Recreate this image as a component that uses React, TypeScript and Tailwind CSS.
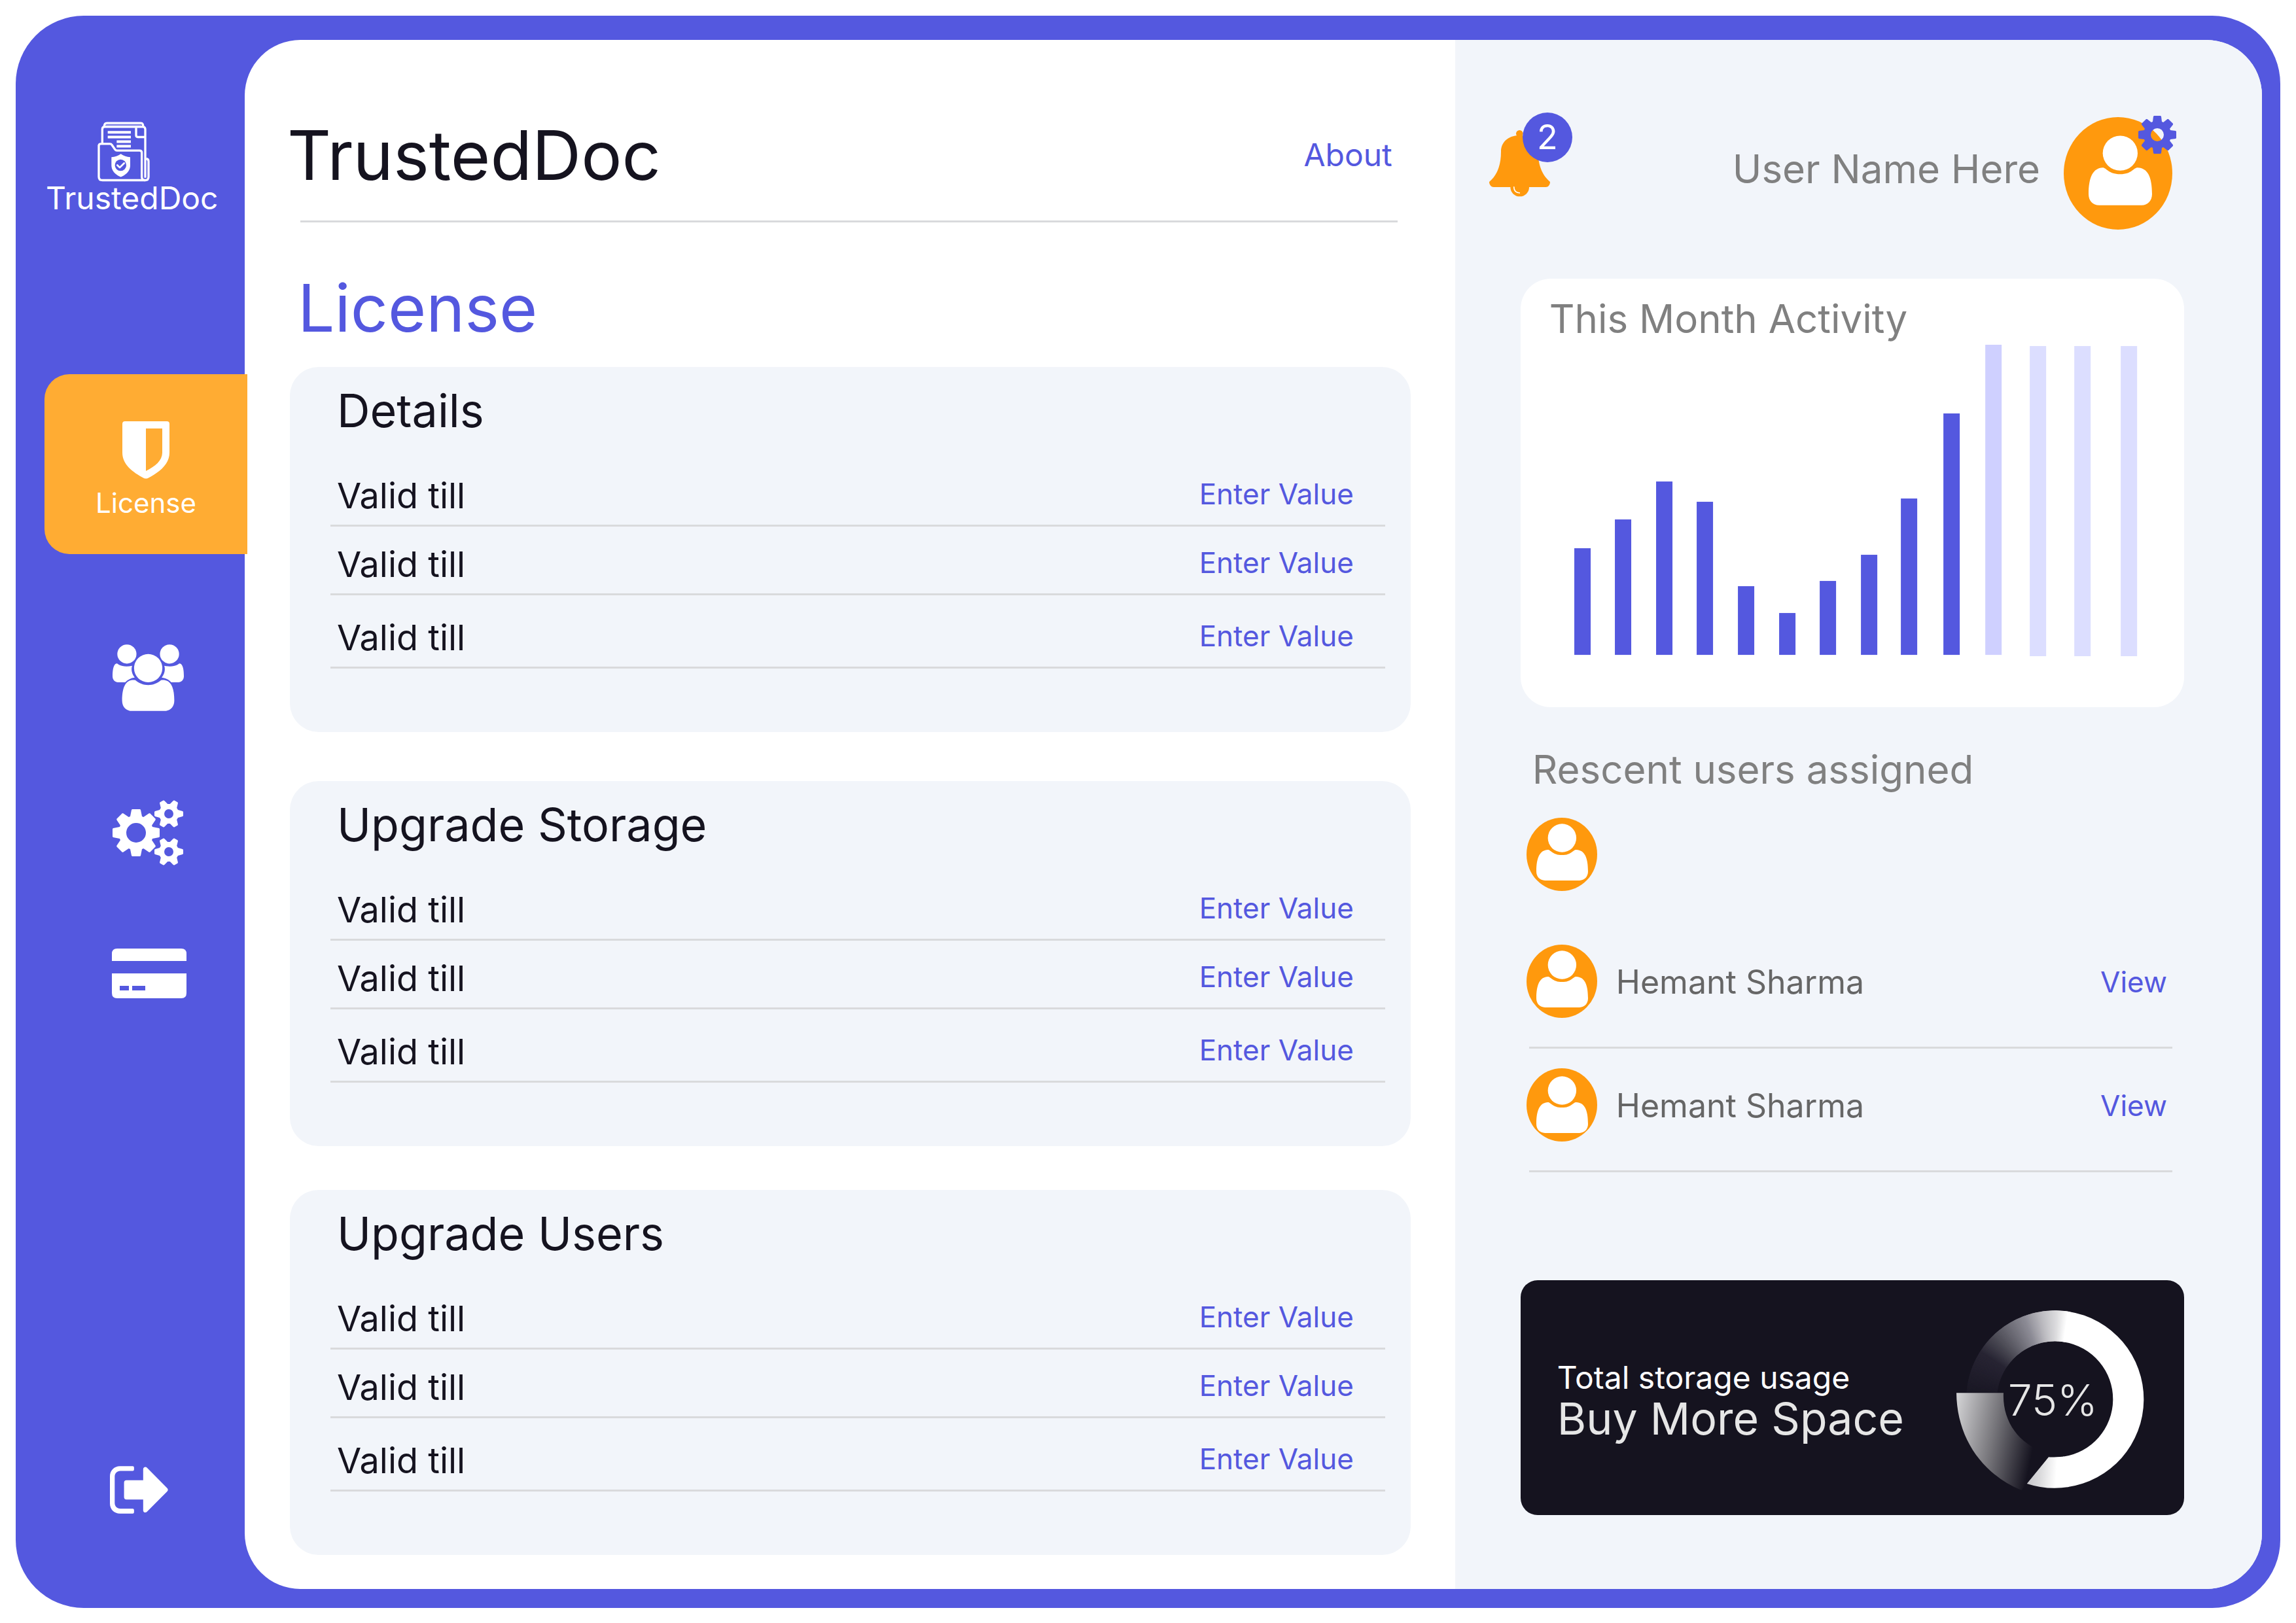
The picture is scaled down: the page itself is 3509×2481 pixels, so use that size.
import React from "react";

/* ---------- drawing helpers ---------- */

function gearPath(cx: number, cy: number, r: number, teeth: number, root: number, hole: number, tip: number, base: number) {
  const pts: string[] = [];
  for (let i = 0; i < teeth; i++) {
    const a = (i * 2 * Math.PI) / teeth;
    const corners = [
      [root, -base],
      [r - 1, -tip],
      [r, -tip + 1],
      [r, tip - 1],
      [r - 1, tip],
      [root, base],
    ];
    corners.forEach(([x, y]) => {
      const px = cx + x * Math.cos(a) - y * Math.sin(a);
      const py = cy + x * Math.sin(a) + y * Math.cos(a);
      pts.push(`${px.toFixed(2)} ${py.toFixed(2)}`);
    });
  }
  return `M${pts.join("L")}Z M${cx - hole} ${cy}a${hole} ${hole} 0 1 0 ${2 * hole} 0a${hole} ${hole} 0 1 0 ${-2 * hole} 0Z`;
}

function LogoIcon() {
  return (
    <svg viewBox="444 252 246 281" className="h-[94px] w-[82px]" fill="none" stroke="#fff" strokeWidth="10" aria-hidden="true">
      <path d="M478 278C478 267 482 261 490 261H646C654 261 657 268 656 278" />
      <path d="M486 270H648" stroke="#8c8fea" strokeWidth="6" />
      <path d="M469 353V289Q469 278 480 278H655Q666 278 666 290V512" />
      <path d="M624 282V317Q624 325 632 325H664" />
      <path d="M494 303H600M494 325H600M535 346H600M535 367H600" strokeWidth="12" />
      <path d="M453 365Q453 356 463 356H504Q510 356 513 361L528 383Q531 387 536 387H640Q650 387 650 397V507Q650 523 665 523Q681 523 681 507V436Q681 426 670 424" />
      <path d="M453 363V507Q453 523 470 523H666" />
      <path d="M554 402Q535 415 511 417V455C511 485 535 500 554 508C573 500 597 485 597 455V417Q573 415 554 402Z" fill="#fff" stroke="none" />
      <circle cx="553" cy="454" r="26" fill="#5458df" stroke="none" />
      <path d="M538 454L549 465L569 445" strokeWidth="8" strokeLinecap="round" strokeLinejoin="round" />
    </svg>
  );
}

function ShieldIcon() {
  return (
    <svg viewBox="0 0 72 88" className="h-[88px] w-[72px]" fill="#fff" aria-hidden="true">
      <path
        fillRule="evenodd"
        d="M4 0H68Q72 0 72 4V48C72 66 56 78 39 87Q36 88 33 87C16 78 0 66 0 48V4Q0 0 4 0ZM36 11V76C50 69 61 60 61 48V11Z"
      />
    </svg>
  );
}

function UsersIcon() {
  const side =
    "M88 160C104 172 126 176 156 170C151 186 153 206 168 224C150 226 136 234 124 246H96C78 246 66 236 66 218C66 190 70 158 88 160Z";
  return (
    <svg viewBox="66 72 328 306" className="h-[102px] w-[109px]" fill="#fff" aria-hidden="true">
      <circle cx="132" cy="116" r="44" />
      <circle cx="328" cy="116" r="44" />
      <path d={side} />
      <path d={side} transform="matrix(-1 0 0 1 460 0)" />
      <circle cx="230" cy="181" r="65" />
      <path d="M171 236C205 266 255 266 289 236C330 230 350 262 350 330C350 360 330 378 304 378H156C130 378 110 360 110 330C110 262 130 230 171 236Z" />
    </svg>
  );
}

function CogsIcon() {
  return (
    <svg viewBox="0 0 108 100" className="h-[100px] w-[108px]" fill="#fff" fillRule="evenodd" aria-hidden="true">
      <path d={gearPath(36, 50, 36, 8, 25, 15, 7, 9)} />
      <path d={gearPath(86, 21, 22, 6, 14, 7, 4, 6)} />
      <path d={gearPath(86, 79, 22, 6, 14, 7, 4, 6)} />
    </svg>
  );
}

function CardIcon() {
  return (
    <svg viewBox="0 0 114 76" className="h-[76px] w-[114px]" fill="#fff" aria-hidden="true">
      <path d="M8 0H106Q114 0 114 8V19H0V8Q0 0 8 0Z" />
      <path fillRule="evenodd" d="M0 38H114V68Q114 76 106 76H8Q0 76 0 68ZM12 57V64H26V57ZM31 57V64H51V57Z" />
    </svg>
  );
}

function SignOutIcon() {
  return (
    <svg viewBox="204 177 268 219" className="h-[73px] w-[89px]" fill="#fff" aria-hidden="true">
      <path d="M250 177H309Q315 177 315 183V193Q315 199 309 199H252C237 199 226 210 226 226V346C226 362 237 373 252 373H309Q315 373 315 379V390Q315 396 309 396H250C224 396 204 376 204 350V223C204 197 224 177 250 177Z" />
      <path d="M280 242H357V192C357 182 368 178 375 185L468 279Q474 286 468 293L375 387C368 394 357 390 357 381V331H280Q269 331 269 320V253Q269 242 280 242Z" />
    </svg>
  );
}

function BellIcon() {
  return (
    <svg viewBox="48 117 279 306" className="h-[102px] w-[93px]" fill="#ff990d" aria-hidden="true">
      <circle cx="187" cy="133" r="16" />
      <circle cx="188" cy="378" r="43" />
      <path d="M187 140C130 142 102 175 102 215C102 285 80 327 48 354C48 368 58 378 68 378H308C318 378 327 368 327 354C295 327 272 285 272 215C272 175 244 142 187 140Z" />
      <path d="M161 376C161 396 172 405 189 405" fill="none" stroke="#fff" strokeWidth="5" />
    </svg>
  );
}

const figure =
  "M224 288C240 288 250 318 304 318C358 318 364 288 384 288C430 290 450 330 450 410C450 440 430 461 402 461H208C178 461 159 440 159 410C159 330 180 290 224 288Z";

function ProfilePicture() {
  return (
    <svg viewBox="0 0 166 172" className="h-[172px] w-[166px]" aria-hidden="true">
      <ellipse cx="83" cy="86" rx="83" ry="86" fill="#ff990d" />
      <svg x="38" y="28" width="97" height="107" viewBox="159 141 291 320" fill="#fff">
        <circle cx="304" cy="222" r="80" />
        <path d={figure} />
      </svg>
    </svg>
  );
}

function Avatar({ drop = 0 }: { drop?: number }) {
  return (
    <svg viewBox="0 0 109 113" className="-ml-1 h-[113px] w-[109px] shrink-0" aria-hidden="true">
      <ellipse cx="54" cy="56" rx="54" ry="56" fill="#ff990d" />
      <svg x="15" y={9 + drop} width="79" height="87" viewBox="159 141 291 320" fill="#fff">
        <circle cx="304" cy="222" r="80" />
        <path d={figure} />
      </svg>
    </svg>
  );
}

function ActivityChart() {
  const bars: [number, number, string][] = [
    [82, 321, "#5458df"],
    [144, 277, "#5458df"],
    [207, 219, "#5458df"],
    [269, 250, "#5458df"],
    [332, 379, "#5458df"],
    [395, 420, "#5458df"],
    [457, 371, "#5458df"],
    [520, 331, "#5458df"],
    [581, 245, "#5458df"],
    [646, 115, "#5458df"],
    [710, 10, "#cfd0ff"],
    [778, 12, "#dcdeff"],
    [846, 12, "#dcdeff"],
    [917, 12, "#dcdeff"],
  ];
  return (
    <svg viewBox="0 0 1014 564" className="block h-auto w-full" role="img" aria-label="Activity per day">
      {bars.map(([x, y, fill]) => (
        <rect key={x} x={x} y={y} width="25" height={(y === 12 ? 486 : 484) - y} fill={fill} />
      ))}
    </svg>
  );
}

const ringStops: [number, number[]][] = [
  [176, [21, 19, 31]],
  [213, [39, 36, 51]],
  [226, [74, 73, 83]],
  [250, [140, 139, 149]],
  [262, [190, 189, 194]],
  [272, [222, 222, 224]],
  [279, [255, 255, 255]],
];

function ringColor(angle: number) {
  for (let i = 1; i < ringStops.length; i++) {
    const [a0, c0] = ringStops[i - 1];
    const [a1, c1] = ringStops[i];
    if (angle <= a1) {
      const t = (angle - a0) / (a1 - a0);
      return `rgb(${c0.map((v, k) => Math.round(v + (c1[k] - v) * t)).join(",")})`;
    }
  }
  return "#fff";
}

function StorageRing() {
  const point = (deg: number, r: number) => {
    const a = (deg * Math.PI) / 180;
    return `${(542 + r * Math.cos(a)).toFixed(1)} ${(471 + r * Math.sin(a)).toFixed(1)}`;
  };
  const slices = Array.from({ length: 104 }, (_, i) => 175 + i);
  return (
    <svg viewBox="0 0 1080 960" className="h-[320px] w-[360px] shrink-0" role="img" aria-label="75% of storage used">
      <defs>
        <linearGradient id="ringEnd" gradientUnits="userSpaceOnUse" x1="413" y1="0" x2="600" y2="12">
          <stop offset="0" stopColor="#b4b3b9" />
          <stop offset="0.6" stopColor="#dadadc" />
          <stop offset="1" stopColor="#fff" />
        </linearGradient>
        <linearGradient id="slice" gradientUnits="userSpaceOnUse" x1="90" y1="500" x2="465" y2="575">
          <stop offset="0" stopColor="#d0d0d2" />
          <stop offset="0.5" stopColor="#77767b" />
          <stop offset="1" stopColor="#15131f" />
        </linearGradient>
      </defs>
      {slices.map((a) => (
        <path
          key={a}
          fill={ringColor(a + 1)}
          d={`M${point(a, 266)}L${point(a, 407)}A407 407 0 0 1 ${point(a + 2, 407)}L${point(a + 2, 266)}A266 266 0 0 0 ${point(a, 266)}Z`}
        />
      ))}
      <path
        fill="#fff"
        d={`M${point(279, 266)}L${point(279, 407)}A407 407 0 0 1 ${point(82, 407)}L${point(82, 266)}A266 266 0 0 0 ${point(279, 266)}Z`}
      />
      <path fill="url(#ringEnd)" d={`M${point(81, 407)}A407 407 0 0 1 413 858L513 736Q528 738 ${point(81, 266)}Z`} />
      <path fill="#15131f" d="M90 440H306V500H90Z" />
      <path
        fill="url(#slice)"
        d="M90 442H306C300 570 375 675 490 712L500 750L388 888C210 815 92 650 90 442Z"
      />
      <text x="532" y="546" textAnchor="middle" fontSize="198" fontWeight="300" fill="#e6e6e6" className="font-['Inter',sans-serif]">
        75%
      </text>
    </svg>
  );
}

/* ---------- page parts ---------- */

function Sidebar() {
  return (
    <div className="flex w-[350px] shrink-0 flex-col pb-36 pt-[161px]">
      <a href="#home" className="ml-[46px] flex flex-col items-start text-white">
        <span className="ml-[78px]">
          <LogoIcon />
        </span>
        <span className="text-[48px] leading-[48px]">TrustedDoc</span>
      </a>
      <nav className="-mr-1 mt-[245px] flex flex-col items-center pl-11">
        <button
          type="button"
          className="relative flex h-[275px] w-full flex-col items-center rounded-l-[38px] bg-[#ffac33] pt-18 text-[42px] leading-[42px] text-white"
        >
          <ShieldIcon />
          <span className="mt-4">License</span>
        </button>
        <button type="button" aria-label="Users" className="mt-[138px] pl-1.5">
          <UsersIcon />
        </button>
        <button type="button" aria-label="Settings" className="mt-[136px] pl-1.5">
          <CogsIcon />
        </button>
        <button type="button" aria-label="Payment" className="mt-[127px] pl-2.5">
          <CardIcon />
        </button>
      </nav>
      <button type="button" aria-label="Sign out" className="ml-36 mt-auto self-start">
        <SignOutIcon />
      </button>
    </div>
  );
}

function ValueCard({ title, className }: { title: string; className: string }) {
  const slug = title.toLowerCase().replace(" ", "-");
  return (
    <section className={`rounded-[44px] bg-[#f2f5fa] pb-[97px] pl-[62px] pr-[39px] pt-[33px] ${className}`}>
      <h3 className="mb-[38px] ml-2.5 text-[70px] leading-[68px]">{title}</h3>
      {[1, 2, 3].map((n) => (
        <div
          key={n}
          className="flex items-start justify-between border-b-3 border-[#d9dadc] pb-[18px] pl-2.5 pr-12 pt-8 last:pt-[39px]"
        >
          <label htmlFor={`${slug}-${n}`} className="text-[54px] leading-[52px]">
            Valid till
          </label>
          <input
            id={`${slug}-${n}`}
            type="text"
            placeholder="Enter Value"
            className="h-[46px] w-80 bg-transparent text-right text-[44px] leading-[46px] text-[#5458df] outline-none placeholder:text-[#5458df] placeholder:opacity-100"
          />
        </div>
      ))}
    </section>
  );
}

function UserRow({ name, className, drop }: { name: string; className: string; drop?: number }) {
  return (
    <li className={`flex items-center gap-7 border-b-3 border-[#d9dadc] pb-[43px] pr-2 ${className}`}>
      <Avatar drop={drop} />
      <span className="flex-1 text-[50px] leading-[50px] text-[#666]">{name}</span>
      <a href="#view" className="text-[44px] leading-[50px] text-[#5458df]">
        View
      </a>
    </li>
  );
}

export default function App() {
  return (
    <div className="flex min-h-screen bg-white p-6 font-['Inter',sans-serif] text-[#15131f]">
      <div className="flex flex-1 rounded-[104px] bg-[#5458df] pr-7">
        <Sidebar />
        <div className="mb-[29px] mt-[37px] grid min-w-0 flex-1 grid-cols-[3fr_2fr] overflow-hidden rounded-[85px] bg-white">
          <main className="pb-[52px] pl-[69px] pr-[68px] pt-[126px]">
            <header className="-ml-1 flex items-center justify-between pr-7">
              <h1 className="text-[104px] leading-[100px]">TrustedDoc</h1>
              <a href="#about" className="text-[48px] leading-[48px] text-[#5458df]">
                About
              </a>
            </header>
            <hr className="ml-4 mr-5 mt-[50px] border-t-3 border-[#d9dadc]" />
            <h2 className="ml-3 mt-[81px] text-[100px] leading-[100px] text-[#5458df]">License</h2>
            <ValueCard title="Details" className="mt-10" />
            <ValueCard title="Upgrade Storage" className="mt-[75px]" />
            <ValueCard title="Upgrade Users" className="mt-[67px]" />
          </main>

          <aside className="bg-[#f2f5fa] pl-[100px] pr-[119px] pt-[118px]">
            <header className="-ml-12 flex items-start justify-between pr-[18px]">
              <button type="button" aria-label="Notifications, 2 new" className="relative mt-5">
                <BellIcon />
                <span className="absolute -top-[27px] left-[51px] flex size-[76px] items-center justify-center rounded-full bg-[#5458df] text-[52px] leading-[52px] text-white">
                  2
                </span>
              </button>
              <div className="flex items-center gap-9">
                <span className="pb-3.5 text-[60px] leading-[60px] text-[#808080]">User Name Here</span>
                <button type="button" aria-label="Profile settings" className="relative">
                  <ProfilePicture />
                  <svg viewBox="0 0 58 58" className="absolute -top-0.5 left-[114px] size-[58px]" fill="#5458df" fillRule="evenodd" aria-hidden="true">
                    <path d={gearPath(29, 29, 29, 8, 20, 10, 6, 7)} />
                  </svg>
                </button>
              </div>
            </header>

            <section className="mt-[75px] rounded-[46px] bg-white pt-[31px]">
              <h2 className="pl-11 text-[60px] leading-[60px] text-[#808080]">This Month Activity</h2>
              <ActivityChart />
            </section>

            <section className="mt-[65px]">
              <h2 className="pl-[18px] text-[60px] leading-[60px] text-[#808080]">Rescent users assigned</h2>
              <ul className="ml-[13px] mr-[18px] mt-[44px]">
                <li>
                  <Avatar />
                </li>
                <UserRow name="Hemant Sharma" className="mt-[81px]" />
                <UserRow name="Hemant Sharma" className="pt-[30px]" drop={3} />
              </ul>
            </section>

            <section className="mt-[165px] flex min-h-[359px] items-center justify-between rounded-[26px] bg-[#15131f] pl-14 pr-[18px] pt-2.5">
              <div className="flex flex-col items-start pb-1">
                <p className="text-[48px] leading-[56px] text-white">Total storage usage</p>
                <a href="#buy" className="text-[68px] leading-[68px] text-[#e6e6e6]">
                  Buy More Space
                </a>
              </div>
              <StorageRing />
            </section>
          </aside>
        </div>
      </div>
    </div>
  );
}
